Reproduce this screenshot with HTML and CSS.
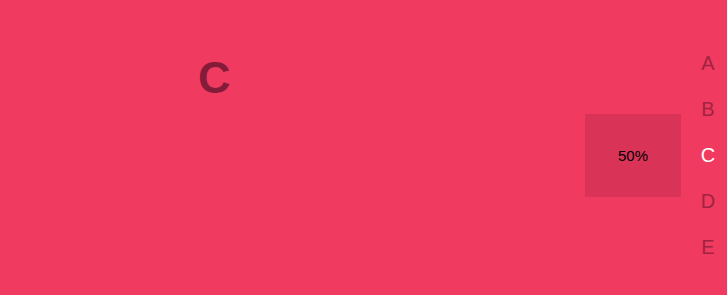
FILE: index.html
```html
<!DOCTYPE html>
<html>
<head>
<meta charset="utf-8">
<link rel="stylesheet" href="styles.css">
</head>
<body>
<div class="app">
  <main class="content">
    <h1 class="title">C</h1>
  </main>
  <div class="indicator">50%</div>
  <nav class="nav">
    <span class="nav-item">A</span>
    <span class="nav-item">B</span>
    <span class="nav-item active">C</span>
    <span class="nav-item">D</span>
    <span class="nav-item">E</span>
  </nav>
</div>
</body>
</html>
```
FILE: styles.css
```css
html, body {
  margin: 0;
  padding: 0;
}
body {
  background: #f03a5f;
  font-family: "Liberation Sans", Arial, sans-serif;
  width: 727px;
  height: 295px;
  overflow: hidden;
}
.app {
  display: flex;
  align-items: center;
  height: 295px;
}
.content {
  flex: 1;
  align-self: stretch;
  padding-top: 55px;
  padding-left: 198px;
}
.title {
  margin: 0;
  font-size: 45px;
  line-height: 45px;
  font-weight: bold;
  color: #841b39;
}
.indicator {
  width: 96px;
  height: 83px;
  background: #d93457;
  display: flex;
  align-items: center;
  justify-content: center;
  font-size: 15px;
  color: #000;
  margin-top: 16px;
}
.nav {
  display: flex;
  flex-direction: column;
  width: 38px;
  margin-left: 8px;
  margin-top: 14px;
}
.nav-item {
  display: block;
  height: 46px;
  line-height: 46px;
  font-size: 20px;
  text-align: center;
  color: #a0243f;
}
.nav-item.active {
  color: #ffffff;
}
```
